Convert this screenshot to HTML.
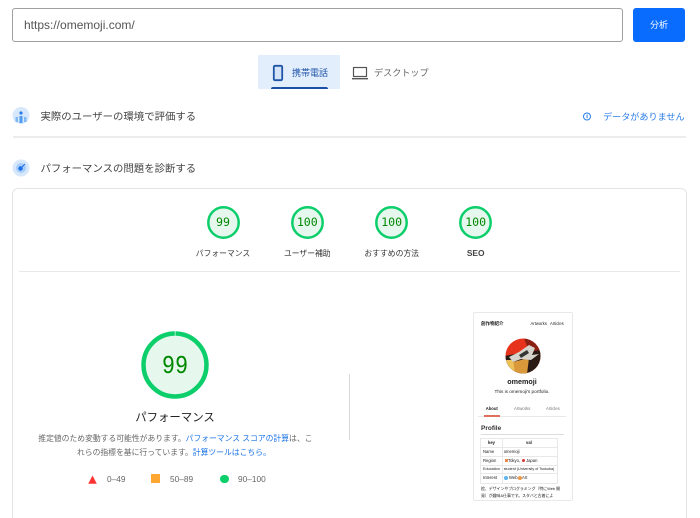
<!DOCTYPE html>
<html lang="ja"><head><meta charset="utf-8">
<style>
html,body{margin:0;padding:0;background:#fff;}
#p{position:relative;width:700px;height:518px;overflow:hidden;background:#fff;font-family:"Liberation Sans","Noto Sans CJK JP",sans-serif;color:#202124;filter:blur(.25px);}
#p div,#p span.a,#p svg{position:absolute;}
.t{white-space:nowrap;line-height:16px;}
.c{text-align:center;}
.g{width:33px;height:33px;}
.gl{font-family:"DejaVu Sans Mono","Liberation Mono",monospace;font-size:11.6px;color:#008800;text-align:center;width:40px;line-height:16px;}
.lb{font-size:7.8px;color:#333;text-align:center;width:100px;line-height:12px;white-space:nowrap;}
.s{font-size:4.2px;line-height:6px;white-space:nowrap;color:#222;}
</style></head><body><div id="p">
<div style="left:12px;top:8px;width:609px;height:32px;border:1px solid #a0a0a0;border-radius:3px;"></div>
<div class="t" style="left:24px;top:17px;font-size:12px;color:#555;">https://omemoji.com/</div>
<div style="left:633px;top:8px;width:52px;height:34px;background:#0a6cff;border-radius:3px;"></div>
<div class="t c" style="left:633px;top:17px;width:52px;font-size:9px;color:#fff;">分析</div>

<div style="left:258px;top:55px;width:82px;height:34px;background:#e3eefc;"></div>
<div style="left:271px;top:87px;width:57px;height:2px;background:#1a4fa5;border-radius:2px 2px 0 0;"></div>
<svg style="left:271px;top:64px;" width="14" height="18" viewBox="0 0 14 18"><rect x="2.800" y="1.800" width="8.400" height="14.400" rx="1.200" fill="#d5e3f7" stroke="#1f55a8" stroke-width="1.800"/></svg>
<div class="t" style="left:292px;top:65px;font-size:9px;color:#1f55a8;">携帯電話</div>
<svg style="left:351px;top:65px;" width="18" height="16" viewBox="0 0 18 16"><rect x="2.500" y="2.500" width="13" height="9" fill="none" stroke="#555" stroke-width="1.200"/><rect x="1" y="13" width="16" height="1.400" fill="#555"/></svg>
<div class="t" style="left:374px;top:65px;font-size:9.100px;color:#666;">デスクトップ</div>

<svg style="left:12px;top:106px;" width="18" height="19" viewBox="0 0 18 19"><circle cx="9" cy="9.500" r="8.500" fill="#d8e8fc"/><circle cx="9" cy="7" r="1.600" fill="#2a7de8"/><rect x="7.500" y="10" width="3" height="7" fill="#4d9bf0"/><rect x="3.500" y="11" width="2.500" height="5" fill="#7fb8f5"/><rect x="12" y="11" width="2.500" height="5" fill="#7fb8f5"/></svg>
<div class="t" style="left:40.500px;top:110px;font-size:10.400px;color:#444;">実際のユーザーの環境で評価する</div>
<svg style="left:582px;top:110.500px;" width="10" height="11" viewBox="0 0 10 11"><circle cx="5" cy="5.500" r="3.500" fill="none" stroke="#2a7de8" stroke-width="1"/><rect x="4.600" y="3.600" width="1" height="3.600" fill="#2a7de8"/></svg>
<div class="t" style="left:603px;top:109px;font-size:9.100px;color:#2a7de8;">データがありません</div>
<div style="left:13px;top:136px;width:673px;height:1.500px;background:#ececec;"></div>

<svg style="left:12px;top:159px;" width="18" height="18" viewBox="0 0 18 18"><circle cx="9" cy="9" r="8.500" fill="#d8e8fc"/><circle cx="9" cy="9" r="5" fill="#a9cdf8"/><circle cx="8.500" cy="9.500" r="2.200" fill="#1a6fe8"/><path d="M9 9L13 5" stroke="#1a6fe8" stroke-width="1"/></svg>
<div class="t" style="left:40.500px;top:162px;font-size:10.400px;color:#444;">パフォーマンスの問題を診断する</div>

<div style="left:12px;top:188px;width:673px;height:340px;border:1px solid #e4e4e4;border-radius:6px;"></div>

<svg class="g" style="left:206.500px;top:205.500px;" viewBox="0 0 33 33"><circle cx="16.500" cy="16.500" r="15.200" fill="#e6f8ee" stroke="#0cce6b" stroke-width="2.500"/></svg>
<svg class="g" style="left:290.800px;top:205.500px;" viewBox="0 0 33 33"><circle cx="16.500" cy="16.500" r="15.200" fill="#e6f8ee" stroke="#0cce6b" stroke-width="2.500"/></svg>
<svg class="g" style="left:375.200px;top:205.500px;" viewBox="0 0 33 33"><circle cx="16.500" cy="16.500" r="15.200" fill="#e6f8ee" stroke="#0cce6b" stroke-width="2.500"/></svg>
<svg class="g" style="left:459.200px;top:205.500px;" viewBox="0 0 33 33"><circle cx="16.500" cy="16.500" r="15.200" fill="#e6f8ee" stroke="#0cce6b" stroke-width="2.500"/></svg>
<div class="gl" style="left:203px;top:214px;">99</div>
<div class="gl" style="left:287.300px;top:214px;">100</div>
<div class="gl" style="left:371.700px;top:214px;">100</div>
<div class="gl" style="left:455.700px;top:214px;">100</div>
<div class="lb" style="left:173px;top:247.500px;">パフォーマンス</div>
<div class="lb" style="left:257.300px;top:247.500px;">ユーザー補助</div>
<div class="lb" style="left:341.700px;top:247.500px;">おすすめの方法</div>
<div class="lb" style="left:425.700px;top:246.500px;font-weight:bold;color:#444;font-size:8.400px;">SEO</div>
<div style="left:19px;top:271px;width:661px;height:1px;background:#e8e8e8;"></div>

<svg style="left:141px;top:331px;" width="68" height="68" viewBox="0 0 68 68"><circle cx="34" cy="34" r="31.500" fill="#e6f8ee"/><circle cx="34" cy="34" r="31.500" fill="none" stroke="#0cce6b" stroke-width="4.500" stroke-dasharray="196.900 1" stroke-dashoffset="-0.500" transform="rotate(-90 34 34)"/></svg>
<div class="c" style="left:135px;top:351px;width:80px;line-height:30px;font-family:'Liberation Mono','DejaVu Sans Mono',monospace;font-size:26px;color:#008800;transform:scaleX(.84);">99</div>
<div class="t c" style="left:75px;top:410px;width:200px;font-size:11.400px;color:#222;">パフォーマンス</div>
<div class="t" style="left:38.300px;top:431px;font-size:7.800px;color:#666;">推定値のため変動する可能性があります。<span style="color:#1a73e8">パフォーマンス スコアの計算</span>は、こ</div>
<div class="t" style="left:77px;top:445px;font-size:7.800px;color:#666;">れらの指標を基に行っています。<span style="color:#1a73e8">計算ツールはこちら。</span></div>
<svg style="left:88px;top:474.500px;" width="9" height="9" viewBox="0 0 9 9"><path d="M4.500 0.500L8.800 8.800H0.200Z" fill="#f33"/></svg>
<div class="t" style="left:107px;top:471px;font-size:8.300px;color:#666;">0–49</div>
<div style="left:151px;top:474px;width:9px;height:9px;background:#ffa733;"></div>
<div class="t" style="left:170px;top:471px;font-size:8.300px;color:#666;">50–89</div>
<div style="left:220px;top:474.500px;width:8.500px;height:8.500px;border-radius:50%;background:#0cce6b;"></div>
<div class="t" style="left:238px;top:471px;font-size:8.300px;color:#666;">90–100</div>
<div style="left:349px;top:374px;width:1px;height:66px;background:#d8d8d8;"></div>

<div style="left:473px;top:312px;width:98px;height:187px;border:1px solid #e8e8e8;border-radius:2px;overflow:hidden;background:#fff;"></div>
<div class="s" style="left:481px;top:320.500px;font-weight:bold;font-size:4.500px;">創作物紹介</div>
<div class="s" style="left:530.500px;top:320.500px;">Artworks</div>
<div class="s" style="left:550px;top:320.500px;">Articles</div>
<svg style="left:505px;top:338px;" width="36" height="36" viewBox="0 0 36 36"><defs><clipPath id="cc"><circle cx="18" cy="18" r="17.500"/></clipPath></defs><g clip-path="url(#cc)"><rect width="36" height="36" fill="#e8331c"/><path d="M19 0H36V16L24 14Z" fill="#8a2014"/><path d="M0 18L14 15L36 12V36H0Z" fill="#2a1a14"/><path d="M8 24L24 20L22 36H8Z" fill="#d9993a"/><path d="M0 22H8L10 36H0Z" fill="#ecc25a"/><path d="M4 19L14 14L24 7L30 10L27 17L34 16L26 22L16 21L8 24Z" fill="#d6d2cc"/><path d="M14 17L22 12L24 15L16 20Z" fill="#333"/></g></svg>
<div class="t c" style="left:472px;top:377px;width:100px;font-size:7.200px;line-height:10px;font-weight:bold;color:#222;">omemoji</div>
<div class="s c" style="left:472px;top:389px;width:100px;font-size:4.700px;">This is omemoji's portfolio.</div>
<div class="s" style="left:485.700px;top:406px;font-weight:bold;">About</div>
<div class="s" style="left:514px;top:406px;color:#777;">Artworks</div>
<div class="s" style="left:546px;top:406px;color:#777;">Articles</div>
<div style="left:478px;top:416px;width:88px;height:1px;background:#e8e8e8;"></div>
<div style="left:484px;top:415px;width:16px;height:1.500px;background:#e0705a;"></div>
<div class="t" style="left:481px;top:424px;font-size:6.500px;line-height:10px;font-weight:bold;color:#333;">Profile</div>
<div style="left:481px;top:434px;width:83px;height:1px;background:#ddd;"></div>
<div style="left:480px;top:438px;width:76px;height:44px;border:1px solid #e8e8e8;"></div>
<div style="left:501.500px;top:438px;width:1px;height:45px;background:#e8e8e8;"></div>
<div style="left:480px;top:447px;width:77px;height:1px;background:#e8e8e8;"></div>
<div style="left:480px;top:456px;width:77px;height:1px;background:#e8e8e8;"></div>
<div style="left:480px;top:465px;width:77px;height:1px;background:#e8e8e8;"></div>
<div style="left:480px;top:473px;width:77px;height:1px;background:#e8e8e8;"></div>
<div class="s" style="left:488px;top:440px;font-weight:bold;">key</div>
<div class="s" style="left:526px;top:440px;font-weight:bold;">val</div>
<div class="s" style="left:483px;top:449px;">Name</div>
<div class="s" style="left:503.700px;top:449px;">omemoji</div>
<div class="s" style="left:483px;top:457.500px;">Region</div>
<div style="left:505px;top:458.500px;width:2.500px;height:3.500px;background:#e8884a;"></div>
<div class="s" style="left:508px;top:457.500px;">Tokyo,</div>
<div style="left:522px;top:458.500px;width:3px;height:3px;border-radius:50%;background:#d33;"></div>
<div class="s" style="left:526px;top:457.500px;">Japan</div>
<div class="s" style="left:483px;top:466px;font-size:3.800px;">Education</div>
<div class="s" style="left:503.700px;top:466px;font-size:3.700px;">student (University of Tsukuba)</div>
<div class="s" style="left:483px;top:475px;">Interest</div>
<div style="left:504px;top:475.500px;width:4px;height:4px;border-radius:50%;background:#5ab4ee;"></div>
<div class="s" style="left:509px;top:475px;">Web,</div>
<div style="left:518px;top:475.500px;width:4px;height:4px;border-radius:50%;background:#ee9a4a;"></div>
<div class="s" style="left:522px;top:475px;">Art</div>
<div class="s" style="left:481px;top:486px;font-size:3.900px;">絵、デザインやプログラミング（特にWeb 開</div>
<div class="s" style="left:481px;top:493px;font-size:3.900px;">発）が趣味&amp;仕事です。スタバと古着によ</div>
</div></body></html>
